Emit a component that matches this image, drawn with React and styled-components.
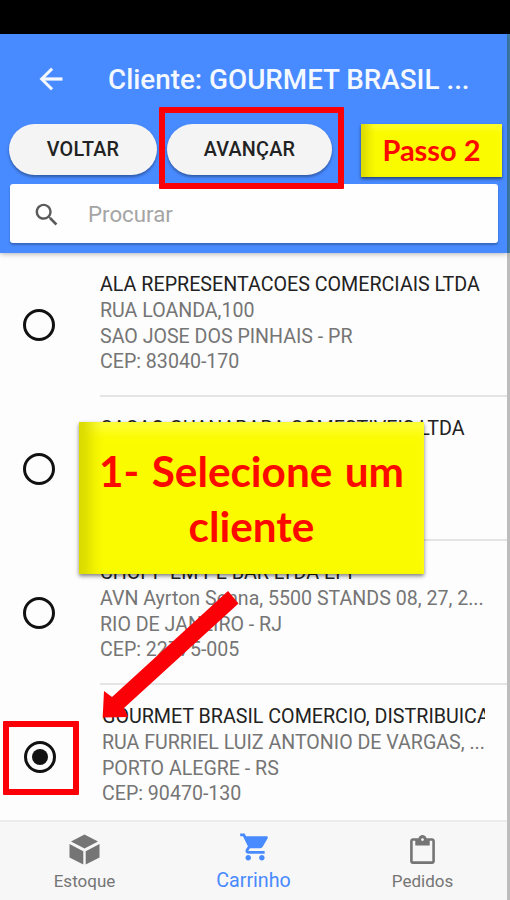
import React from 'react'
import styled, { createGlobalStyle } from 'styled-components'
import { IoMdArrowBack, IoMdSearch, IoMdCart, IoMdClipboard } from 'react-icons/io'

const clients = [
  {
    name: 'ALA REPRESENTACOES COMERCIAIS LTDA',
    lines: ['RUA LOANDA,100', 'SAO JOSE DOS PINHAIS - PR', 'CEP: 83040-170'],
  },
  {
    name: 'CACAO GUANABARA COMESTIVEIS LTDA',
    lines: [],
  },
  {
    name: 'CHOPP EM PE BAR LTDA EPP',
    lines: ['AVN Ayrton Senna, 5500 STANDS 08, 27, 2...', 'RIO DE JANEIRO - RJ', 'CEP: 22775-005'],
  },
  {
    name: 'GOURMET BRASIL COMERCIO, DISTRIBUICA',
    lines: ['RUA FURRIEL LUIZ ANTONIO DE VARGAS, ...', 'PORTO ALEGRE - RS', 'CEP: 90470-130'],
    selected: true,
  },
]

const CubeIcon = () => (
  <svg viewBox="0 0 33 33" fill="currentColor">
    <path d="M16.5 1.5 L30 8.6 L16.5 15.6 L3 8.6 Z" />
    <path d="M1.5 11 L15.3 18.2 V31.5 L1.5 24.5 Z" />
    <path d="M31.5 11 L17.7 18.2 V31.5 L31.5 24.5 Z" />
  </svg>
)

const App = () => {
  return (
    <Screen>
      <GlobalStyle />
      <StatusBar />
      <Body>
        <Phone>
          <Header>
            <TitleBar>
              <IoMdArrowBack />
              <Title>Cliente: GOURMET BRASIL ...</Title>
            </TitleBar>
            <Buttons>
              <PillButton $width={148}>VOLTAR</PillButton>
              <PillButton $width={165}>AVANÇAR</PillButton>
            </Buttons>
            <SearchBox>
              <IoMdSearch />
              <span>Procurar</span>
            </SearchBox>
          </Header>
          <List>
            {clients.map((client) => (
              <Row key={client.name} $selected={client.selected}>
                <Radio $selected={client.selected} />
                <Info>
                  <Name>{client.name}</Name>
                  {client.lines.map((line) => (
                    <Line key={line}>{line}</Line>
                  ))}
                </Info>
              </Row>
            ))}
          </List>
          <Tabs>
            <Tab>
              <CubeIcon />
              <span>Estoque</span>
            </Tab>
            <Tab $active>
              <IoMdCart />
              <span>Carrinho</span>
            </Tab>
            <Tab>
              <IoMdClipboard />
              <span>Pedidos</span>
            </Tab>
          </Tabs>
        </Phone>
        <Edge />
      </Body>

      <Frame $x={159} $y={107} $w={185} $h={82} />
      <Frame $x={3} $y={721} $w={76} $h={74} />
      <StepNote>Passo 2</StepNote>
      <HintNote>
        <span>1- Selecione um</span>
        <span>cliente</span>
      </HintNote>
      <Arrow viewBox="0 0 140 132">
        <path d="M128 1 L138.5 13.5 L24 118 L28 127 L2.7 127.5 L4 101 L12 107 Z" />
      </Arrow>
    </Screen>
  )
}

export default App

const GlobalStyle = createGlobalStyle`
  * {
    box-sizing: border-box;
  }
  body {
    margin: 0;
    font-family: Roboto, sans-serif;
  }
`

const Screen = styled.div`
  position: relative;
  display: flex;
  flex-direction: column;
  width: 510px;
  height: 900px;
  overflow: hidden;
  background: #fdfdfd;
`

const StatusBar = styled.div`
  height: 34px;
  background: #000;
`

const Body = styled.div`
  display: flex;
  flex: 1;
  min-height: 0;
`

const Phone = styled.div`
  display: flex;
  flex-direction: column;
  width: 507px;
`

const Edge = styled.div`
  width: 3px;
  background: linear-gradient(#3f7fae 219px, #bdbdbd 219px);
`

const Header = styled.header`
  height: 219px;
  background: #488aff;
  box-shadow: 0 1px 5px rgba(0, 0, 0, 0.3);
  z-index: 1;
`

const TitleBar = styled.div`
  display: flex;
  align-items: center;
  height: 90px;
  padding-left: 34px;
  color: #f4f8ff;

  svg {
    width: 34px;
    height: 34px;
    stroke: currentColor;
    stroke-width: 4px;
  }
`

const Title = styled.h1`
  margin: 1px 0 0 40px;
  font-size: 27.8px;
  font-weight: 500;
  white-space: nowrap;
`

const Buttons = styled.div`
  display: flex;
  gap: 10px;
  padding-left: 9px;
`

const PillButton = styled.button`
  width: ${(props) => props.$width}px;
  height: 51px;
  padding: 0;
  border: 0;
  border-radius: 26px;
  background: #f4f4f4;
  box-shadow: 0 2px 3px rgba(0, 0, 0, 0.35);
  color: #222;
  font-family: inherit;
  font-size: 19.8px;
  font-weight: 500;
  letter-spacing: 0.2px;
`

const SearchBox = styled.div`
  display: flex;
  align-items: center;
  width: 488px;
  height: 59px;
  margin: 9px 0 0 10px;
  padding: 1px 0 0 22px;
  border-radius: 3px;
  background: #fefefe;
  box-shadow: 0 2px 2px rgba(0, 0, 0, 0.25);
  color: #a5a5a5;
  font-size: 22.3px;

  svg {
    width: 29px;
    height: 29px;
    margin-right: 27px;
    color: #5b5b5b;
  }
`

const List = styled.main`
  height: 567px;
  overflow: hidden;
`

const Row = styled.div`
  display: flex;
  height: 144px;
  padding-left: ${(props) => (props.$selected ? 24 : 23)}px;
`

const Radio = styled.div`
  flex: none;
  display: grid;
  place-items: center;
  width: 32px;
  height: 32px;
  margin: 56px ${(props) => (props.$selected ? 46 : 45)}px 0 0;
  border: 3px solid #111;
  border-radius: 50%;

  &::after {
    content: '';
    width: 16px;
    height: 16px;
    border-radius: 50%;
    background: ${(props) => (props.$selected ? '#111' : 'transparent')};
  }
`

const Info = styled.div`
  flex: 1;
  min-width: 0;
  padding: 19px 22px 0 0;
  border-bottom: 2px solid #e4e4e4;
  font-size: 19.68px;
  line-height: 25.8px;
  white-space: nowrap;
`

const Name = styled.div`
  overflow: hidden;
  color: #222;
`

const Line = styled.div`
  color: #757575;
  font-size: 19.6px;
`

const Tabs = styled.nav`
  display: flex;
  height: 80px;
  border-top: 2px solid #ececec;
  background: #f7f7f7;
`

const Tab = styled.div`
  flex: 1;
  display: flex;
  flex-direction: column;
  align-items: center;
  padding-top: ${(props) => (props.$active ? 8 : 11)}px;
  color: ${(props) => (props.$active ? '#488aff' : '#757575')};
  font-size: ${(props) => (props.$active ? 19.7 : 17)}px;
  line-height: 26px;

  svg {
    width: ${(props) => (props.$active ? 34 : 33)}px;
    height: ${(props) => (props.$active ? 34 : 33)}px;
    margin-bottom: ${(props) => (props.$active ? 4 : 2)}px;
  }
`

const Frame = styled.div`
  position: absolute;
  z-index: 2;
  left: ${(props) => props.$x}px;
  top: ${(props) => props.$y}px;
  width: ${(props) => props.$w}px;
  height: ${(props) => props.$h}px;
  border: 6px solid #fc0007;
  border-radius: 1px;
`

const Note = styled.div`
  position: absolute;
  z-index: 2;
  display: flex;
  flex-direction: column;
  align-items: center;
  justify-content: center;
  background: #fbfb00;
  color: #fc0a00;
  font-family: Lato, sans-serif;
  font-weight: 700;
  white-space: nowrap;
`

const StepNote = styled(Note)`
  left: 361px;
  top: 124px;
  width: 141px;
  height: 53px;
  padding-bottom: 2px;
  box-shadow: 0 2px 3px rgba(0, 0, 0, 0.5), inset 12px 0 10px -5px #d9d900, inset 0 5px 5px #ffff30;
  font-size: 29px;
`

const HintNote = styled(Note)`
  left: 79px;
  top: 422px;
  width: 345px;
  height: 152px;
  box-shadow: 0 2px 4px rgba(0, 0, 0, 0.5), inset 20px 0 14px -8px #dada00, inset 0 12px 12px -4px #ffff40;
  font-size: 42.3px;
  line-height: 55.5px;
  word-spacing: 2px;
`

const Arrow = styled.svg`
  position: absolute;
  z-index: 2;
  left: 100px;
  top: 590px;
  width: 140px;
  height: 132px;
  fill: #fc0007;
`
